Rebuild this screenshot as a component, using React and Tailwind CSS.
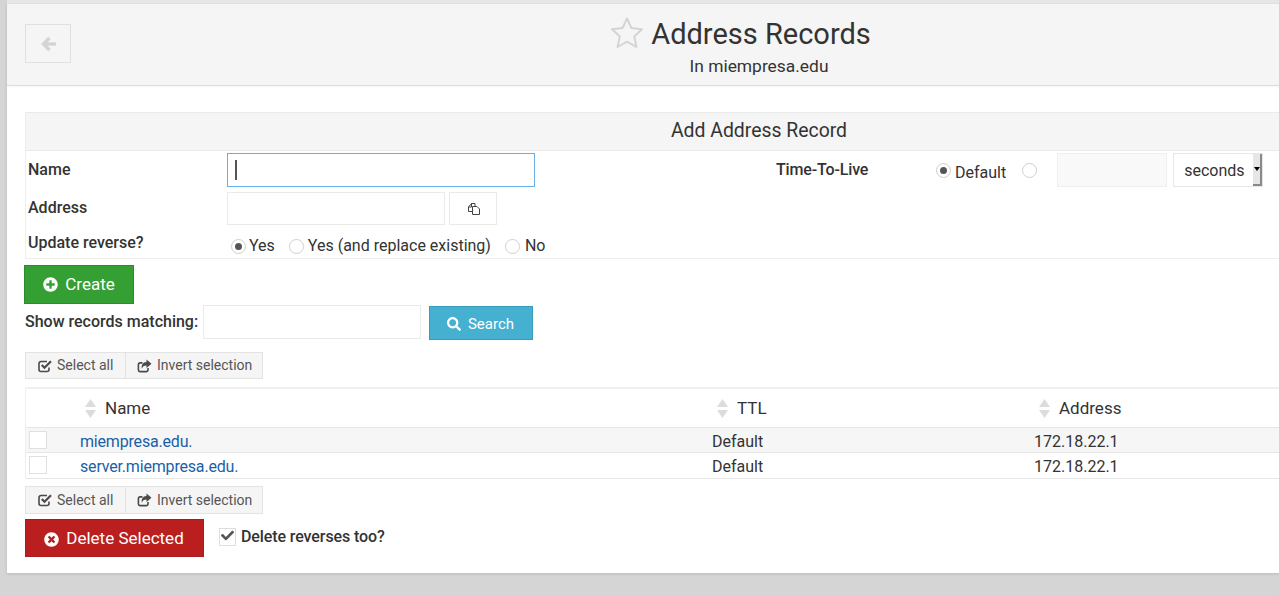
import React from 'react';
import { FaCheck, FaPlusCircle, FaSearch, FaTimesCircle } from 'react-icons/fa';

// --- small drawings ---
const StarOutline = () => (
  <svg width="32" height="31" viewBox="0 0 32 31" className="mb-[4px] shrink-0">
    <polygon
      points="16,1.5 20.4,11 31,12.2 23.2,19.4 25.4,30 16,24.7 6.6,30 8.8,19.4 1,12.2 11.6,11"
      fill="none"
      stroke="#d4d4d4"
      strokeWidth="2"
      strokeLinejoin="round"
    />
  </svg>
);

const BackArrow = () => (
  <svg width="15" height="16" viewBox="0 0 15 16" fill="none" stroke="#d4d4d4" strokeWidth="3.4">
    <path d="M8.5 2 2.5 8l6 6" />
    <path d="M3 8h12" />
  </svg>
);

const CopyIcon = () => (
  <svg width="14" height="14" viewBox="0 0 14 14" fill="none" stroke="#444" strokeWidth="1" className="ml-[2px]">
    <path d="M5.5 9.5h-4V5L4.5 1.5H8V4.5" />
    <path d="M4.5 1.5V5h-3" />
    <path d="M5.5 4.5H10L12.5 7v5.5h-7z" />
  </svg>
);

const CheckSquareIcon = () => (
  <svg width="14" height="14" viewBox="0 0 14 14" fill="none" stroke="#4a4a4a" className="mr-[5px] shrink-0">
    <path d="M11 8.5v2a2 2 0 0 1-2 2H3a2 2 0 0 1-2-2v-6a2 2 0 0 1 2-2h6" strokeWidth="1.6" />
    <path d="M3.8 6 6.5 8.8 13 2.3" strokeWidth="2.2" />
  </svg>
);

const ShareSquareIcon = () => (
  <svg width="15" height="14" viewBox="0 0 15 14" fill="none" className="mr-[5px] shrink-0">
    <path d="M11 9v2a1.6 1.6 0 0 1-1.6 1.6H3A1.6 1.6 0 0 1 1.4 11V5.5A1.6 1.6 0 0 1 3 3.9h2.5" stroke="#4a4a4a" strokeWidth="1.6" />
    <path d="M9.5.5 14.5 4.7 9.5 9V6.4C7 6.4 5.4 7.2 5 9.8 3.9 6.5 5.8 3 9.5 3z" fill="#4a4a4a" />
  </svg>
);

const SortIcon = () => (
  <svg width="11" height="19" viewBox="0 0 11 19" className="shrink-0">
    <polygon points="5.5,0 11,8 0,8" fill="#dcdcdc" />
    <polygon points="5.5,19 11,11 0,11" fill="#dcdcdc" />
  </svg>
);

const Radio = ({ checked }) => (
  <span className="flex h-[15px] w-[15px] shrink-0 items-center justify-center rounded-full border border-[#cfcfcf] bg-white">
    {checked && <span className="h-[7px] w-[7px] rounded-full bg-[#555]" />}
  </span>
);

const SelectionButtons = ({ height = 'h-[27px]' }) => (
  <div className={`flex w-[238px] border border-[#e3e3e3] bg-[#f5f5f5] text-[14px] text-[#555] ${height}`}>
    <div className="flex w-[100px] items-center border-r border-[#e3e3e3] pl-[12px]">
      <CheckSquareIcon />
      Select all
    </div>
    <div className="flex flex-1 items-center pl-[11px]">
      <ShareSquareIcon />
      Invert selection
    </div>
  </div>
);

const rows = [
  { name: 'miempresa.edu.', bg: 'bg-[#f6f6f6]', height: 'h-[25px]' },
  { name: 'server.miempresa.edu.', bg: 'bg-white', height: 'h-[26px]' },
];

export default function App() {
  return (
    <div className="h-[596px] overflow-hidden bg-[#d5d5d5] pl-[7px] font-['Roboto',sans-serif] text-[16px] text-[#333]">
      <div className="h-[4px] bg-[#e6e6e6]" />
      <div className="h-[569px] bg-white shadow-[0_1px_3px_rgba(0,0,0,0.12)]">
        {/* Header */}
        <header className="relative h-[82px] border-b border-[#dcdcdc] bg-[#f5f5f5] shadow-[0_1px_3px_rgba(0,0,0,0.04)]">
          <div className="absolute left-[18px] top-[20px] flex h-[39px] w-[46px] items-center justify-center border border-[#e0e0e0]">
            <BackArrow />
          </div>
          <div className="flex flex-col items-center pl-[234px] pt-[12px]">
            <div className="mr-[38px] flex items-center gap-[8px]">
              <StarOutline />
              <h1 className="text-[29px] leading-[36px]">Address Records</h1>
            </div>
            <p className="mr-[2px] mt-[3px] text-[17.4px] leading-[22px]">In miempresa.edu</p>
          </div>
        </header>

        {/* Add form */}
        <section className="ml-[18px] mt-[26px] border-b border-l border-[#eeeeee]">
          <h2 className="flex h-[39px] items-center justify-center border-b border-t border-[#eaeaea] bg-[#f5f5f5] pb-[2px] pl-[213px] text-[19.4px] leading-none">
            Add Address Record
          </h2>
          <div className="flex h-[107px] pl-[2px]">
            <div className="flex w-[199px] flex-col font-medium">
              <div className="flex h-[38px] items-center">Name</div>
              <div className="flex h-[38px] items-center">Address</div>
              <div className="flex h-[31px] items-center">Update reverse?</div>
            </div>
            <div className="flex w-[549px] flex-col pt-[2px]">
              <div className="flex h-[34px] w-[308px] items-center border border-[#66afe9] pl-[7px]">
                <span className="h-[20px] w-[2px] bg-[#555]" />
              </div>
              <div className="mt-[5px] flex h-[33px] gap-[4px]">
                <div className="w-[218px] border border-[#eaeaea]" />
                <div className="flex w-[48px] items-center justify-center border border-[#eaeaea]">
                  <CopyIcon />
                </div>
              </div>
              <div className="mt-[11px] flex items-center pl-[4px] leading-[20px]">
                <Radio checked />
                <span className="ml-[3px]">Yes</span>
                <span className="ml-[14px]"><Radio /></span>
                <span className="ml-[4px]">Yes (and replace existing)</span>
                <span className="ml-[14px]"><Radio /></span>
                <span className="ml-[5px]">No</span>
              </div>
            </div>
            <div className="w-[160px] pt-[10px] font-medium leading-[18px] tracking-[-0.15px]">Time-To-Live</div>
            <div className="flex h-[36px] items-center pt-[2px]">
              <Radio checked />
              <span className="ml-[4px] pt-[5px]">Default</span>
              <span className="ml-[16px]"><Radio /></span>
              <div className="ml-[20px] h-[34px] w-[110px] border border-[#efefef] bg-[#f9f9f9]" />
              <div className="relative ml-[6px] flex h-[34px] w-[90px] items-center border border-[#e6e6e6] pl-[10px] pt-[1px]">
                seconds
                <span className="absolute right-0 top-0 flex h-full w-[9px] items-center justify-center border-b-2 border-r-2 border-[#8a8a8a] bg-[#e6e6e6]">
                  <span className="h-0 w-0 border-x-[3px] border-t-[4px] border-x-transparent border-t-black" />
                </span>
              </div>
            </div>
          </div>
        </section>

        <button className="ml-[17px] mt-[6px] flex h-[39px] w-[110px] items-center justify-center border border-[#2d8a2d] bg-[#34a034] text-[17px] text-white">
          <FaPlusCircle size={15} className="mr-[7px]" />
          Create
        </button>

        {/* Search */}
        <div className="ml-[18px] flex h-[35px] items-center">
          <span className="w-[178px] font-medium">Show records matching:</span>
          <div className="h-[34px] w-[218px] border border-[#eaeaea]" />
          <button className="ml-[8px] mt-[2px] flex h-[34px] w-[104px] items-center justify-center border border-[#3a9cbb] bg-[#46b0d1] pr-[1px] pt-[3px] text-[15px] text-white">
            <FaSearch size={14} className="mr-[7px]" />
            Search
          </button>
        </div>

        <div className="ml-[18px] mt-[13px]">
          <SelectionButtons />
        </div>

        {/* Records */}
        <div className="ml-[18px] mt-[8px] border-l border-t-2 border-[#f0f0f0]">
          <div className="grid h-[39px] grid-cols-[54px_632px_322px_1fr] items-center border-b border-[#e6e6e6] pt-[1px] text-[17px]">
            <div />
            <div className="flex items-center gap-[9px] pl-[5px]"><SortIcon />Name</div>
            <div className="flex items-center gap-[9px] pl-[5px]"><SortIcon />TTL</div>
            <div className="flex items-center gap-[9px] pl-[5px]"><SortIcon />Address</div>
          </div>
          {rows.map((row) => (
            <div key={row.name} className={`grid grid-cols-[54px_632px_322px_1fr] items-center border-b border-[#e6e6e6] ${row.height} ${row.bg}`}>
              <div className="pl-[3px]">
                <div className="mb-[2px] h-[18px] w-[18px] border border-[#e0e0e0] bg-white" />
              </div>
              <a className="pt-[2px] tracking-[-0.18px] text-[#1a5fa8]">{row.name}</a>
              <div className="pt-[2px]">Default</div>
              <div className="pt-[2px]">172.18.22.1</div>
            </div>
          ))}
        </div>

        <div className="ml-[18px] mt-[7px]">
          <SelectionButtons height="h-[28px]" />
        </div>

        {/* Delete */}
        <div className="ml-[18px] mt-[5px] flex">
          <button className="flex h-[38px] w-[179px] items-center justify-center border border-[#a81c1c] bg-[#bb1e1e] pr-[1px] pt-[2px] text-[17px] text-white">
            <FaTimesCircle size={15} className="mr-[7px]" />
            Delete Selected
          </button>
          <div className="ml-[15px] mt-[9px] flex h-[18px] items-center font-medium tracking-[-0.1px]">
            <span className="flex h-[18px] w-[17px] items-start justify-center border border-[#dedede] text-[#555]">
              <FaCheck size={13} />
            </span>
            <span className="ml-[5px]">Delete reverses too?</span>
          </div>
        </div>
      </div>
    </div>
  );
}
